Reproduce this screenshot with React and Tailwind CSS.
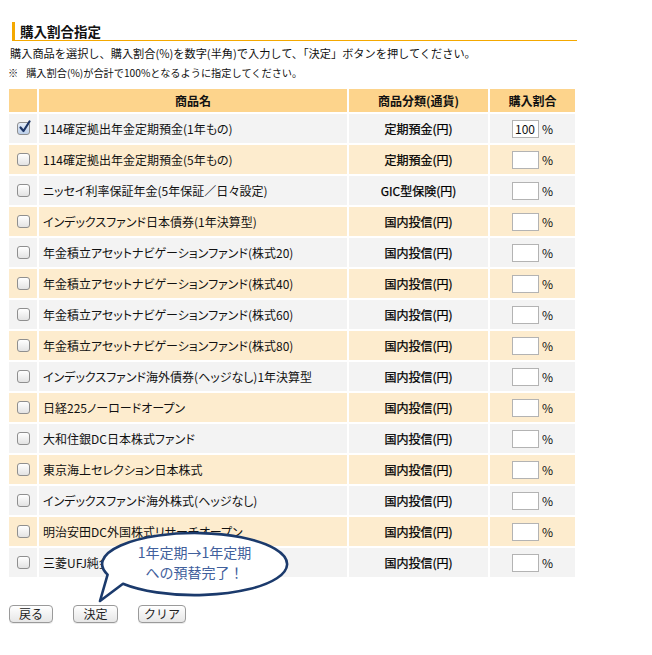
import React from "react";

const rows = [
  { name: "114確定拠出年金定期預金(1年もの)", type: "定期預金(円)", checked: true, rate: "100" },
  { name: "114確定拠出年金定期預金(5年もの)", type: "定期預金(円)" },
  { name: "ニッセイ利率保証年金(5年保証／日々設定)", type: "GIC型保険(円)" },
  { name: "インデックスファンド日本債券(1年決算型)", type: "国内投信(円)" },
  { name: "年金積立アセットナビゲーションファンド(株式20)", type: "国内投信(円)" },
  { name: "年金積立アセットナビゲーションファンド(株式40)", type: "国内投信(円)" },
  { name: "年金積立アセットナビゲーションファンド(株式60)", type: "国内投信(円)" },
  { name: "年金積立アセットナビゲーションファンド(株式80)", type: "国内投信(円)" },
  { name: "インデックスファンド海外債券(ヘッジなし)1年決算型", type: "国内投信(円)" },
  { name: "日経225ノーロードオープン", type: "国内投信(円)" },
  { name: "大和住銀DC日本株式ファンド", type: "国内投信(円)" },
  { name: "東京海上セレクション日本株式", type: "国内投信(円)" },
  { name: "インデックスファンド海外株式(ヘッジなし)", type: "国内投信(円)" },
  { name: "明治安田DC外国株式リサーチオープン", type: "国内投信(円)" },
  { name: "三菱UFJ純金ファンド", type: "国内投信(円)" },
];

const Checkbox = ({ checked }) => (
  <span
    className={`relative flex h-[13px] w-[13px] items-center justify-center rounded-[3px] border border-[#8f8f8f] bg-gradient-to-b ${
      checked ? "from-[#e6eef9] to-[#bccfe9]" : "from-white to-[#e3e3e3]"
    }`}
  >
    {checked && (
      <svg viewBox="0 0 14 14" className="absolute -top-[3px] left-[0px] h-[14px] w-[14px]">
        <path
          d="M2.5 7.5 L5.5 11 L11.5 1.5"
          fill="none"
          stroke="#1d3565"
          strokeWidth="2.2"
          strokeLinecap="round"
          strokeLinejoin="round"
        />
      </svg>
    )}
  </span>
);

const Button = ({ label, width }) => (
  <button
    className={`${width} h-[18px] rounded-[4px] border border-[#9a9a9a] bg-gradient-to-b from-white to-[#e6e6e6] text-[12px] leading-[16px] text-[#222] shadow-[0_1px_0_rgba(0,0,0,0.08)]`}
  >
    {label}
  </button>
);

export default function App() {
  return (
    <div className="relative h-[655px] w-[652px] overflow-hidden bg-white font-['Noto_Sans_CJK_JP',sans-serif] text-[#111]">
      <div className="pt-[22px]">
        <h2 className="ml-[12px] w-[565px] border-b border-l-[3px] border-[#f4a800] pl-[5px] text-[13.5px] font-bold leading-[18px]">
          購入割合指定
        </h2>
        <p className="ml-[10px] mt-[4px] text-[11.2px] leading-[16px]">
          購入商品を選択し、購入割合(%)を数字(半角)で入力して、「決定」ボタンを押してください。
        </p>
        <p className="ml-[8px] mt-[4px] text-[10.2px] leading-[16px]">
          <span className="mr-[8px]">※</span>購入割合(%)が合計で100%となるように指定してください。
        </p>

        <div className="ml-[9px] mt-[8px] grid w-[566px] grid-cols-[28px_308px_139px_85px] gap-[2px] text-[12px]">
          <div className="h-[23px] bg-[#fdd48c]" />
          <div className="flex h-[23px] items-center justify-center bg-[#fdd48c] font-bold">商品名</div>
          <div className="flex h-[23px] items-center justify-center bg-[#fdd48c] font-bold">商品分類(通貨)</div>
          <div className="flex h-[23px] items-center justify-center bg-[#fdd48c] font-bold">購入割合</div>

          {rows.map((row, i) => {
            const bg = i % 2 === 0 ? "bg-[#f3f3f3]" : "bg-[#fdecce]";
            return (
              <React.Fragment key={i}>
                <div className={`flex h-[29px] items-center justify-center ${bg}`}>
                  <Checkbox checked={row.checked} />
                </div>
                <div className={`flex h-[29px] items-center pl-[4px] [font-feature-settings:'palt'] ${bg}`}>
                  {row.name}
                </div>
                <div
                  className={`flex h-[29px] items-center justify-center text-black [-webkit-text-stroke:0.25px_#000] ${bg}`}
                >
                  {row.type}
                </div>
                <div className={`flex h-[29px] items-center justify-center gap-[3px] ${bg}`}>
                  <span className="flex h-[18px] w-[27px] items-center border border-[#b3b3b3] bg-white px-[2px] text-[12px] leading-[16px]">
                    {row.rate || ""}
                  </span>
                  <span>%</span>
                </div>
              </React.Fragment>
            );
          })}
        </div>

        <div className="ml-[9px] mt-[28px] flex gap-[20px]">
          <Button label="戻る" width="w-[44px]" />
          <Button label="決定" width="w-[45px]" />
          <Button label="クリア" width="w-[48px]" />
        </div>
      </div>

      {/* speech bubble */}
      <svg
        className="pointer-events-none absolute left-0 top-0 h-[655px] w-[652px]"
        viewBox="0 0 652 655"
      >
        <path
          d="M107.6 574.6 L100 601 L123 583.7 A92.5 31 0 1 0 107.6 574.6 Z"
          fill="white"
          stroke="#1b3a6c"
          strokeWidth="2.6"
          strokeLinejoin="round"
        />
      </svg>
      <div className="pointer-events-none absolute left-[102px] top-[542px] w-[185px] text-center text-[14px] leading-[20px] text-[#41609c]">
        <div>1年定期→1年定期</div>
        <div>への預替完了！</div>
      </div>
    </div>
  );
}
